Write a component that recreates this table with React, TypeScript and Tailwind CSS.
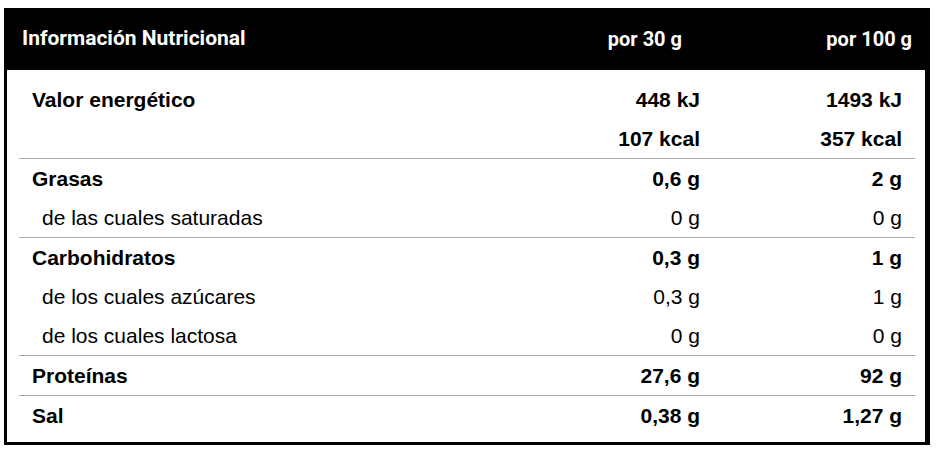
import React from 'react';

type Row = {
	label: string;
	a: string;
	b: string;
	sub?: boolean;
};

const groups: Row[][] = [
	[
		{ label: 'Valor energético', a: '448 kJ', b: '1493 kJ' },
		{ label: '', a: '107 kcal', b: '357 kcal' },
	],
	[
		{ label: 'Grasas', a: '0,6 g', b: '2 g' },
		{ label: 'de las cuales saturadas', a: '0 g', b: '0 g', sub: true },
	],
	[
		{ label: 'Carbohidratos', a: '0,3 g', b: '1 g' },
		{ label: 'de los cuales azúcares', a: '0,3 g', b: '1 g', sub: true },
		{ label: 'de los cuales lactosa', a: '0 g', b: '0 g', sub: true },
	],
	[{ label: 'Proteínas', a: '27,6 g', b: '92 g' }],
	[{ label: 'Sal', a: '0,38 g', b: '1,27 g' }],
];

const NutritionRow = ({ label, a, b, sub }: Row) => (
	<div
		className={`flex h-[39px] items-center text-[21px] text-black ${sub ? 'font-normal' : 'font-bold'}`}
	>
		<span className={`flex-1 ${sub ? 'pl-[23px]' : 'pl-[13px]'}`}>{label}</span>
		<span className="w-[200px] text-right">{a}</span>
		<span className="w-[215px] pr-[13px] text-right">{b}</span>
	</div>
);

export default function App() {
	return (
		<div className="min-h-screen bg-white pt-2 pl-1">
			<div className="w-[926px] border-[3px] border-black border-r-[5px] bg-white font-['Liberation_Sans',Arial,sans-serif]">
				<div className="flex h-[59px] items-center bg-black pb-[3px] pl-[15px] pr-[13px] font-['Roboto',sans-serif] text-[20px] font-bold text-white">
					<span className="flex-1 text-[21px]">Información Nutricional</span>
					<span className="w-[230px] text-right">por 30 g</span>
					<span className="w-[230px] text-right">por 100 g</span>
				</div>
				<div className="pt-[10px] pb-[7px] pl-[12px] pr-[10px]">
					{groups.map((group, i) => (
						<div
							key={i}
							className={i < groups.length - 1 ? 'border-b border-[#aaaaaa]' : ''}
						>
							{group.map((row, j) => (
								<NutritionRow key={j} {...row} />
							))}
						</div>
					))}
				</div>
			</div>
		</div>
	);
}
